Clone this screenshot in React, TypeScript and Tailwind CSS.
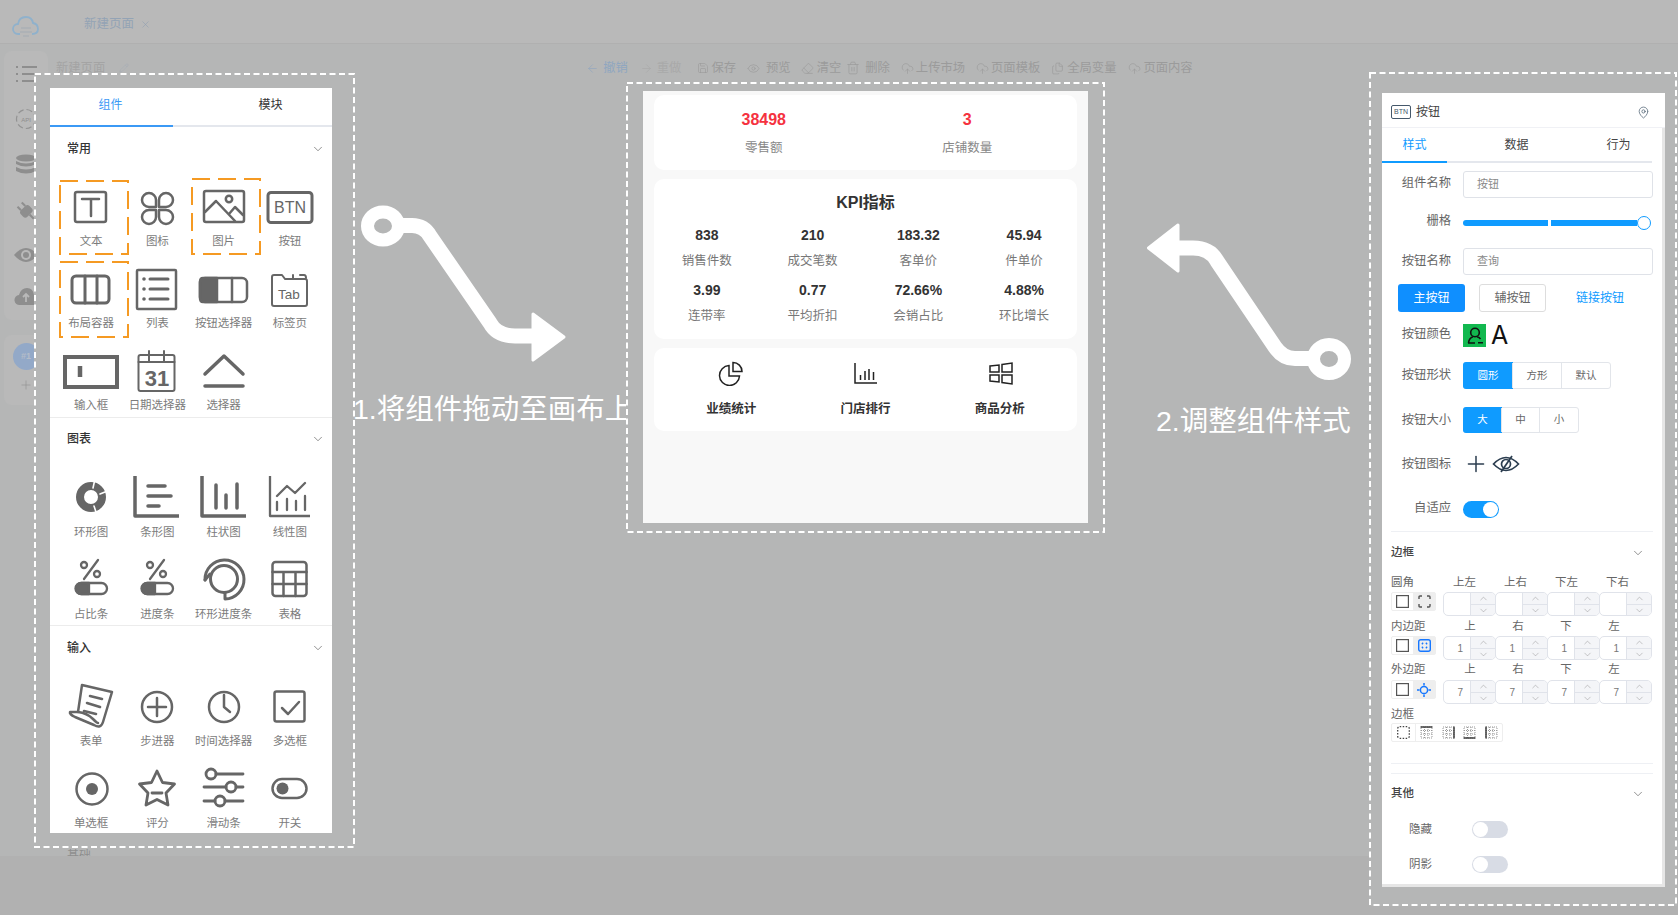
import type { ReactNode } from "react";
import { ArrowLeft, ArrowRight, ChevronDown, ChevronUp, CloudUpload, Eraser, Eye, Files, MapPin, Pencil, Plus, Save, Trash2, X } from "lucide-react";

function Ic({ children, sw = 2.5 }: { children: ReactNode; sw?: number }) {
  return (
    <svg width="44" height="44" viewBox="0 0 44 44" fill="none" stroke="#666" strokeWidth={sw} strokeLinecap="round" strokeLinejoin="round" className="overflow-visible">
      {children}
    </svg>
  );
}

const icons: Record<string, ReactNode> = {
  文本: <Ic><rect x="6" y="6" width="31" height="30" rx="2" /><path d="M13 13H30M22 13V30" /></Ic>,
  图标: <Ic><path d="M21 21H14a7 7 0 1 1 7-7ZM24 21V14a7 7 0 1 1 7 7ZM21 24V31a7 7 0 1 1-7-7ZM24 24H31a7 7 0 1 1-7 7Z" /></Ic>,
  图片: <Ic><rect x="2" y="5" width="40" height="31" rx="2" /><circle cx="27" cy="13" r="3.2" /><path d="M3 26L14 15L33 35M27 28L33 21L41 29" /></Ic>,
  按钮: <Ic sw={3}><rect x="0" y="6.5" width="44" height="30" rx="3" /><text x="22" y="27" textAnchor="middle" fontSize="16" fill="#666" stroke="none">BTN</text></Ic>,
  布局容器: <Ic sw={3}><rect x="3" y="8" width="37" height="27" rx="4" /><path d="M16 8V35M28 8V35" /></Ic>,
  列表: <Ic sw={2.5}><rect x="2" y="2" width="39" height="39" rx="1" /><path d="M15 11H33M15 21H33M15 31H33" strokeWidth="3" /><circle cx="9" cy="11" r="1.8" fill="#666" stroke="none" /><circle cx="9" cy="21" r="1.8" fill="#666" stroke="none" /><circle cx="9" cy="31" r="1.8" fill="#666" stroke="none" /></Ic>,
  按钮选择器: <Ic sw={2.5}><rect x="-2" y="10" width="47" height="24" rx="5" /><path d="M1 10H15V34H1Q-2 34-2 30V14Q-2 10 1 10Z" fill="#666" /><path d="M30 10V34" /></Ic>,
  标签页: <Ic sw={2}><path d="M4 36V9q0-2 2-2h8l3 4H37q2 0 2 2V36q0 2-2 2H6q-2 0-2-2ZM17 11H38M25 7V11M32 7H36Q38 7 38 10" /><text x="21" y="31" textAnchor="middle" fontSize="13.5" fill="#666" stroke="none">Tab</text></Ic>,
  输入框: <Ic sw={4}><path d="M-4 7H48V37H-4Z" strokeLinejoin="miter" /><path d="M11 16V27" strokeLinecap="butt" strokeWidth="4.5" /></Ic>,
  日期选择器: <Ic sw={2}><rect x="3.5" y="5" width="36" height="36" rx="2" /><path d="M3.5 12H39.5M14 1V12M29 1V12" /><text x="22" y="36" textAnchor="middle" fontSize="22" fontWeight="700" fill="#666" stroke="none">31</text></Ic>,
  选择器: <Ic sw={3.5}><path d="M3 24L22 6L41 24M3 36H41" /></Ic>,
  环形图: <Ic sw={8}><circle cx="22" cy="22" r="11" /><path d="M26 4L24 13M41 15L31 19M28 40L25 31" stroke="#fff" strokeWidth="1.6" /></Ic>,
  条形图: <Ic sw={3.5}><path d="M0 1V41H44" strokeLinecap="butt" /><path d="M13 11H30M13 21H36M13 31H24" /></Ic>,
  柱状图: <Ic sw={3.5}><path d="M0 1V41H44" strokeLinecap="butt" /><path d="M14 10V33M24 20V33M35 9V33" /></Ic>,
  线性图: <Ic sw={2.3}><path d="M2 1V41H42" strokeLinecap="butt" /><path d="M9 21L19 11L27 18L37 8M9 27V35M19 24V35M28 26V35M37 21V35" /></Ic>,
  占比条: <Ic sw={2.3}><circle cx="15" cy="8" r="3" /><circle cx="28" cy="17" r="3" /><path d="M29 3L15 22" /><rect x="7" y="26" width="31" height="11" rx="5.5" /><path d="M12 26H20V37H12A5.5 5.5 0 0 1 12 26Z" fill="#666" /></Ic>,
  进度条: <Ic sw={2.3}><circle cx="15" cy="8" r="3" /><circle cx="28" cy="17" r="3" /><path d="M29 3L15 22" /><rect x="7" y="26" width="31" height="11" rx="5.5" /><path d="M12 26H20V37H12A5.5 5.5 0 0 1 12 26Z" fill="#666" /></Ic>,
  环形进度条: <Ic sw={3}><circle cx="22" cy="22" r="13.5" /><path d="M3 23A19.5 19.5 0 1 1 23 42V36" /><path d="M3 23L8 17" /></Ic>,
  表格: <Ic sw={2.5}><rect x="4.5" y="5" width="34" height="34" rx="3" /><path d="M4.5 15H38.5M4.5 27H38.5M15.5 15V39M27.5 15V39" /></Ic>,
  表单: <Ic sw={2.5}><path d="M13 0L43 7L34 37Q32 44 25 40L6 32Q0 29 1 27L9 27Z" /><path d="M9 27Q18 28 24 34Q28 38 29 38" /><path d="M21 11L33 14M18 18L31 22M15 26L27 29" strokeWidth="2.6" /></Ic>,
  步进器: <Ic sw={2.5}><circle cx="22" cy="22" r="15" /><path d="M22 13V31M13 22H31" /></Ic>,
  时间选择器: <Ic sw={2.5}><circle cx="22" cy="22" r="15" /><path d="M22 10V22L28 27" /></Ic>,
  多选框: <Ic sw={2.5}><rect x="6.5" y="6.5" width="30" height="30" rx="2" /><path d="M14 23L20 29L31 17" /></Ic>,
  单选框: <Ic sw={2.5}><circle cx="23" cy="22" r="15.5" /><circle cx="23" cy="22" r="6" fill="#666" stroke="none" /></Ic>,
  评分: <Ic sw={2.8}><path d="M22 4L27.5 15.5L39.5 17L31 26L33 38L22 32.5L11 38L13 26L4.5 17L16.5 15.5Z" /><path d="M17 26H27" /></Ic>,
  滑动条: <Ic sw={2.8}><path d="M14 7H41M2 20H24M34 20H41M2 34H13M23 34H41" /><circle cx="9" cy="7" r="5" /><circle cx="29" cy="20" r="5" /><circle cx="18" cy="34" r="5" /></Ic>,
  开关: <Ic sw={2.5}><rect x="4.5" y="12" width="34" height="19" rx="9.5" /><circle cx="14.5" cy="21.5" r="6" fill="#666" stroke="none" /></Ic>,
};

function DashBox({ w, h, color, dash, sw }: { w: number; h: number; color: string; dash: string; sw: number }) {
  return (
    <svg width={w} height={h} className="absolute left-0 top-0 pointer-events-none overflow-visible">
      <rect x={sw / 2} y={sw / 2} width={w - sw} height={h - sw} fill="none" stroke={color} strokeWidth={sw} strokeDasharray={dash} />
    </svg>
  );
}

function Item({ name, mark, labelClass }: { name: string; mark?: ReactNode; labelClass: string }) {
  return (
    <div className="relative flex h-[82px] flex-col items-center pt-[19px]">
      <div className="flex h-[44px] w-[44px] shrink-0 items-center justify-center">{icons[name]}</div>
      <div className={`whitespace-nowrap text-[11.5px] leading-[20px] text-[#7c7c7c] ${labelClass}`}>{name}</div>
      {mark}
    </div>
  );
}

function PaletteSection({ title, names, headClass, labelClass, marks }: { title: string; names: string[]; headClass: string; labelClass: string; marks?: Record<string, ReactNode> }) {
  return (
    <div>
      <div className={`flex items-center justify-between pl-[17px] pr-[7px] ${headClass}`}>
        <span className="text-[12px] font-medium text-[#333]">{title}</span>
        <ChevronDown size={14} strokeWidth={1} color="#444" />
      </div>
      <div className="grid grid-cols-4 pl-[8px] pr-[9px] -mt-1">
        {names.map((n) => (
          <Item key={n} name={n} mark={marks?.[n]} labelClass={labelClass} />
        ))}
      </div>
    </div>
  );
}

function Palette() {
  const marks = {
    文本: <div className="absolute left-[1px] top-[13px]"><DashBox w={70} h={75} color="#f59a23" dash="18 8" sw={2} /></div>,
    图片: <div className="absolute left-[0px] top-[11px]"><DashBox w={70} h={77} color="#f59a23" dash="18 8" sw={2} /></div>,
    布局容器: <div className="absolute left-[1px] top-[12px]"><DashBox w={70} h={77} color="#f59a23" dash="18 8" sw={2} /></div>,
  };
  return (
    <div className="h-[745px] w-[282px] overflow-hidden bg-white">
      <div className="flex h-[39px] border-b-2 border-[#e4e7ed]">
        <div className="-mb-[2px] flex w-[123px] items-center justify-center border-b-[2px] border-[#3b99f5] pb-[4px] pr-[2px] text-[12px] text-[#3b99f5]">组件</div>
        <div className="flex flex-1 items-center justify-center pb-[4px] pl-[36px] text-[12px] text-[#333]">模块</div>
      </div>
      <div className="border-b border-[#ececec] h-[291px]">
        <PaletteSection title="常用" headClass="h-[44px]" labelClass="mt-[1px]" names={["文本", "图标", "图片", "按钮", "布局容器", "列表", "按钮选择器", "标签页", "输入框", "日期选择器", "选择器"]} marks={marks} />
      </div>
      <div className="border-b border-[#ececec] h-[208px]">
        <PaletteSection title="图表" headClass="h-[42px]" labelClass="mt-[3px]" names={["环形图", "条形图", "柱状图", "线性图", "占比条", "进度条", "环形进度条", "表格"]} />
      </div>
      <PaletteSection title="输入" headClass="h-[44px]" labelClass="mt-[2px]" names={["表单", "步进器", "时间选择器", "多选框", "单选框", "评分", "滑动条", "开关"]} />
    </div>
  );
}

function Stat({ value, label }: { value: string; label: string }) {
  return (
    <div className="flex flex-col items-center">
      <div className="h-[26px] text-[14px] font-bold leading-[26px] text-[#333]">{value}</div>
      <div className="text-[12.5px] leading-[26px] text-[#777]">{label}</div>
    </div>
  );
}

function Phone() {
  return (
    <div className="flex h-[432px] w-[445px] flex-col gap-[9px] bg-[#f8f8f8] px-[11px] pt-[4px]">
      <div className="flex h-[75px] rounded-[10px] bg-white px-[8px] pt-[12px]">
        {[["38498", "零售额"], ["3", "店铺数量"]].map(([v, l]) => (
          <div key={l} className="flex flex-1 flex-col items-center">
            <div className="h-[26px] text-[16px] font-bold leading-[26px] text-[#f5323f]">{v}</div>
            <div className="mt-[2px] text-[12.5px] leading-[26px] text-[#888]">{l}</div>
          </div>
        ))}
      </div>
      <div className="h-[160px] rounded-[10px] bg-white pt-[12px]">
        <div className="text-center text-[16px] font-bold leading-[24px] text-[#333]">KPI指标</div>
        <div className="mt-[7px] grid grid-cols-4 gap-y-[3px]">
          {[["838", "销售件数"], ["210", "成交笔数"], ["183.32", "客单价"], ["45.94", "件单价"], ["3.99", "连带率"], ["0.77", "平均折扣"], ["72.66%", "会销占比"], ["4.88%", "环比增长"]].map(([v, l]) => (
            <Stat key={l} value={v} label={l} />
          ))}
        </div>
      </div>
      <div className="grid h-[83px] grid-cols-3 rounded-[10px] bg-white px-[10px] pt-[12px]">
        {[
          ["业绩统计", <g key="a"><path d="M11 5.5A10 10 0 1 0 21.5 16H11Z" /><path d="M15 2.5A9 9 0 0 1 24 11.5H15Z" /></g>],
          ["门店排行", <g key="b"><path d="M3 3V23H25" /><path d="M8.5 15V20M13 11V20M17 9V20M21.5 12V20" /></g>],
          ["商品分析", <g key="c"><path d="M3 6L12 5V12H3ZM3 15H12V22L3 21ZM15 4.5L25 3V12H15ZM15 15H25V24L15 22.5Z" /></g>],
        ].map(([l, g]) => (
          <div key={l as string} className="flex flex-col items-center">
            <svg width="26" height="26" viewBox="0 0 26 26" fill="none" stroke="#222" strokeWidth="1.5">{g}</svg>
            <div className="mt-[13px] text-[12.5px] font-semibold leading-[20px] text-[#333]">{l}</div>
          </div>
        ))}
      </div>
    </div>
  );
}

function FormLabel({ children }: { children: ReactNode }) {
  return <div className="w-[69px] shrink-0 text-right text-[12.3px] text-[#666]">{children}</div>;
}

function TextField({ value }: { value: string }) {
  return <div className="ml-[12px] flex h-[27px] w-[190px] items-center rounded-[3px] border border-[#dfe2e8] pl-[13px] text-[11px] text-[#8a8a8a]">{value}</div>;
}

function Segments({ items, widths, h }: { items: string[]; widths: string[]; h: string }) {
  return (
    <div className={`ml-[12px] flex ${h} rounded-[3px] border border-[#e2e5ea] text-[10.5px] text-[#666]`}>
      {items.map((s, i) => (
        <div key={s} className={`flex items-center justify-center ${widths[i]} ${i === 0 ? "-m-px rounded-l-[3px] bg-[#0f9bff] text-white" : "border-l border-[#e2e5ea] first:border-0"}`}>
          {s}
        </div>
      ))}
    </div>
  );
}

function Toggle({ on }: { on?: boolean }) {
  return (
    <div className={`flex h-[17px] w-[36px] items-center rounded-full px-[1px] ${on ? "justify-end bg-[#0f9bff]" : "bg-[#d8dce5]"}`}>
      <div className="h-[15px] w-[15px] rounded-full bg-white" />
    </div>
  );
}

function NumBox({ value }: { value?: string }) {
  return (
    <div className="-mr-px flex h-[24px] w-[53px] overflow-hidden rounded-[5px] border border-[#e0e3ea]">
      <div className="flex w-[26px] items-center justify-end pr-[7px] text-[10px] text-[#777]">{value}</div>
      <div className="flex flex-1 flex-col border-l border-[#e0e3ea] bg-[#f4f5f8]">
        <div className="flex flex-1 items-center justify-center border-b border-[#e0e3ea]"><ChevronUp size={11} strokeWidth={1} color="#888" /></div>
        <div className="flex flex-1 items-center justify-center"><ChevronDown size={11} strokeWidth={1} color="#888" /></div>
      </div>
    </div>
  );
}

function SpacingRow({ label, heads, headWidth, labelWidth, labelRow, value, icon }: { label: string; heads: string[]; headWidth: string; labelWidth: string; labelRow: string; value?: string; icon: ReactNode }) {
  return (
    <>
      <div className={`flex h-[18px] text-[11.5px] text-[#666] ${labelRow}`}>
        <div className={labelWidth}>{label}</div>
        {heads.map((h, i) => (
          <div key={i} className={`${headWidth} text-center`}>{h}</div>
        ))}
      </div>
      <div className="mt-[1px] flex h-[24px] items-start">
        <div className="mr-[7px] flex h-[19px] w-[45px] items-stretch rounded-[2px] border border-[#eeeeee]">
          <div className="flex w-[21px] items-center justify-center">
            <svg width="13" height="13" viewBox="0 0 13 13" fill="none" stroke="#555" strokeWidth="1.2"><rect x="0.6" y="0.6" width="11.8" height="11.8" /></svg>
          </div>
          <div className="flex flex-1 items-center justify-center bg-[#eeeeee]">{icon}</div>
        </div>
        {[0, 1, 2, 3].map((i) => (
          <NumBox key={i} value={value} />
        ))}
      </div>
    </>
  );
}

function ConfigPanel() {
  return (
    <div className="h-[794px] w-[283px] bg-white">
      <div className="flex h-[35px] items-center border-b border-[#f0f1f5] pl-[9px] pr-[15px] pt-[4px]">
        <div className="flex h-[14px] w-[20px] items-center justify-center rounded-[2px] border-[1.5px] border-[#45586b] text-[7px] text-[#45586b]">BTN</div>
        <span className="ml-[5px] text-[12px] text-[#444]">按钮</span>
        <MapPin size={13} strokeWidth={1.3} color="#45586b" className="ml-auto" />
      </div>
      <div className="h-[759px] border-r-[3px] border-b-[3px] border-[#e6e6e6]">
        <div className="mr-[10px] flex h-[35px] border-b-2 border-[#e4e7ed] text-[12px]">
          <div className="-mb-[2px] flex w-[65px] items-center justify-center border-b-2 border-[#0f9bff] text-[#0f9bff]">样式</div>
          <div className="ml-[37px] flex w-[65px] items-center justify-center text-[#444]">数据</div>
          <div className="ml-[37px] flex w-[65px] items-center justify-center text-[#444]">行为</div>
        </div>
        <div className="mt-[8px] flex items-center"><div className="-mt-[2px]"><FormLabel>组件名称</FormLabel></div><TextField value="按钮" /></div>
        <div className="flex h-[50px] items-center">
          <div className="-mt-[4px]"><FormLabel>栅格</FormLabel></div>
          <div className="ml-[12px] flex w-[188px] items-center">
            <div className="h-[6px] w-[85px] rounded-l-full bg-[#0f9bff]" />
            <div className="ml-[3px] h-[6px] flex-1 bg-[#0f9bff]" />
            <div className="h-[14px] w-[14px] rounded-full border-[1.5px] border-[#0f9bff] bg-white" />
          </div>
        </div>
        <div className="flex items-center"><div className="-mt-[1px]"><FormLabel>按钮名称</FormLabel></div><TextField value="查询" /></div>
        <div className="mt-[9px] flex h-[28px] items-center pl-[16px] text-[12px]">
          <div className="flex h-[28px] w-[67px] items-center justify-center rounded-[3px] bg-[#0f8fff] text-white">主按钮</div>
          <div className="ml-[14px] flex h-[28px] w-[67px] items-center justify-center rounded-[3px] border border-[#dddddd] text-[#666]">辅按钮</div>
          <div className="w-[108px] text-center text-[#0f9bff]">链接按钮</div>
        </div>
        <div className="mt-[12px] flex h-[23px] items-center">
          <div className="-mt-[2px]"><FormLabel>按钮颜色</FormLabel></div>
          <div className="ml-[12px] flex h-[23px] w-[23px] items-center justify-center bg-[#12b84f]">
            <svg width="20" height="20" viewBox="0 0 20 20" fill="none" stroke="#111" strokeWidth="1.6"><circle cx="10" cy="6.5" r="4.3" /><path d="M3.5 17Q4 12 8 10.8M12 10.8Q14.5 11.6 15.5 13M3 17H10M13 16.8H18" /></svg>
          </div>
          <span className="ml-[5px] text-[25px] leading-none text-[#111] font-['Inter',sans-serif]">A</span>
        </div>
        <div className="mt-[15px] flex items-center">
          <FormLabel>按钮形状</FormLabel>
          <Segments items={["圆形", "方形", "默认"]} widths={["w-[50px]", "w-[49px]", "w-[49px]"]} h="h-[27px]" />
        </div>
        <div className="mt-[18px] flex items-center">
          <FormLabel>按钮大小</FormLabel>
          <Segments items={["大", "中", "小"]} widths={["w-[39px]", "w-[38px]", "w-[39px]"]} h="h-[26px]" />
        </div>
        <div className="mt-[20px] flex h-[20px] items-center">
          <div className="mt-[2px]"><FormLabel>按钮图标</FormLabel></div>
          <Plus size={26} strokeWidth={1.4} color="#2c3e50" className="ml-[12px] mt-[1px] shrink-0" />
          <svg width="28" height="20" viewBox="0 0 28 20" fill="none" stroke="#2c3e50" strokeWidth="1.7" className="ml-[3px] mt-[1px]"><path d="M1.5 10Q14-3 26.5 10Q14 23 1.5 10Z" /><circle cx="14" cy="10" r="4.5" /><path d="M9 18L20 2" /></svg>
        </div>
        <div className="mt-[28px] flex h-[17px] items-center">
          <div className="-mt-[2px]"><FormLabel>自适应</FormLabel></div>
          <div className="ml-[12px]"><Toggle on /></div>
        </div>
        <div className="mx-[9px] mt-[13px] border-t border-[#eef0f4]" />
        <div className="flex h-[41px] items-center justify-between pl-[9px] pr-[17px] text-[11.5px] font-medium text-[#444]">
          <span>边框</span>
          <ChevronDown size={14} strokeWidth={1} color="#444" />
        </div>
        <div className="pl-[9px]">
          <SpacingRow label="圆角" heads={["上左", "上右", "下左", "下右"]} headWidth="w-[51px]" labelWidth="w-[48px]" labelRow="items-end" icon={<svg width="13" height="13" viewBox="0 0 13 13" fill="none" stroke="#555" strokeWidth="1.4"><path d="M1 4V2Q1 1 2 1H4M9 1H11Q12 1 12 2V4M12 9V11Q12 12 11 12H9M4 12H2Q1 12 1 11V9" /></svg>} />
          <div className="mt-[1px]" />
          <SpacingRow label="内边距" heads={["上", "右", "下", "左"]} headWidth="w-[48px]" labelWidth="w-[55px]" labelRow="items-center pt-[2px]" value="1" icon={<svg width="13" height="13" viewBox="0 0 13 13" fill="none" stroke="#1677ff" strokeWidth="1.4"><rect x="0.7" y="0.7" width="11.6" height="11.6" rx="2" /><path d="M4 4L5 5M9 4L8 5M4 9L5 8M9 9L8 8" strokeWidth="1.8" /></svg>} />
          <div className="mt-[1px]" />
          <SpacingRow label="外边距" heads={["上", "右", "下", "左"]} headWidth="w-[48px]" labelWidth="w-[55px]" labelRow="items-center" value="7" icon={<svg width="14" height="14" viewBox="0 0 14 14" fill="none" stroke="#1677ff" strokeWidth="1.5"><circle cx="7" cy="7" r="3.6" /><path d="M7 0V2.5M7 11.5V14M0 7H2.5M11.5 7H14" /></svg>} />
          <div className="mt-[1px] h-[18px] text-[11.5px] leading-[18px] text-[#666]">边框</div>
          <div className="flex h-[19px] w-[112px] items-center rounded-[2px] border border-[#eeeeee]">
            <div className="flex h-full w-[24px] items-center justify-center border-r border-[#eeeeee]">
              <svg width="13" height="13" viewBox="0 0 13 13" fill="none" stroke="#444" strokeWidth="1.3" strokeDasharray="1.5 1.5"><rect x="0.7" y="0.7" width="11.6" height="11.6" rx="2" /></svg>
            </div>
            {["M0.5 1H12.5", "M12 0.5V12.5", "M0.5 12H12.5", "M1 0.5V12.5"].map((d) => (
              <div key={d} className="flex flex-1 items-center justify-center">
                <svg width="13" height="13" viewBox="0 0 13 13" fill="none" stroke="#999" strokeWidth="1" strokeDasharray="1 1"><path d="M1 1H12V12H1ZM1 4.500H12M1 8H12M4.500 1V12M8 1V12" /><path d={d} stroke="#333" strokeWidth="1.4" strokeDasharray="none" /></svg>
              </div>
            ))}
          </div>
        </div>
        <div className="mx-[9px] mt-[21px] border-t border-[#eef0f4]" />
        <div className="mx-[9px] mt-[9px] border-t border-[#eef0f4]" />
        <div className="flex h-[40px] items-center justify-between pl-[9px] pr-[17px] text-[11.5px] font-medium text-[#444]">
          <span>其他</span>
          <ChevronDown size={14} strokeWidth={1} color="#444" />
        </div>
        <div className="mt-[7px] flex h-[17px] items-center pl-[27px] text-[11.5px] text-[#666]"><span className="w-[63px]">隐藏</span><Toggle /></div>
        <div className="mt-[18px] flex h-[17px] items-center pl-[27px] text-[11.5px] text-[#666]"><span className="w-[63px]">阴影</span><Toggle /></div>
      </div>
    </div>
  );
}

function Backdrop() {
  const tools: [ReactNode, string, string][] = [
    [<ArrowLeft key="a" size={13} strokeWidth={1.2} color="#8fa6c0" />, "撤销", "text-[#8fa6c0] gap-[4px]"],
    [<ArrowRight key="b" size={13} strokeWidth={1.2} />, "重做", "text-[#a9a9a9] gap-[4px] ml-[12px]"],
    [<Save key="c" size={12} strokeWidth={1.2} />, "保存", "text-[#9b9b9b] gap-[2px] ml-[16px]"],
    [<Eye key="d" size={13} strokeWidth={1.2} />, "预览", "text-[#9b9b9b] gap-[6px] ml-[11px]"],
    [<Eraser key="e" size={13} strokeWidth={1.2} />, "清空", "text-[#9b9b9b] gap-[3px] ml-[10px]"],
    [<Trash2 key="f" size={14} strokeWidth={1.2} />, "删除", "text-[#9b9b9b] gap-[5px] ml-[5px]"],
    [<CloudUpload key="g" size={13} strokeWidth={1.2} />, "上传市场", "text-[#9b9b9b] gap-[2px] ml-[11px]"],
    [<CloudUpload key="h" size={13} strokeWidth={1.2} />, "页面模板", "text-[#9b9b9b] gap-[2px] ml-[11px]"],
    [<Files key="i" size={13} strokeWidth={1.2} />, "全局变量", "text-[#9b9b9b] gap-[3px] ml-[11px]"],
    [<CloudUpload key="j" size={13} strokeWidth={1.2} />, "页面内容", "text-[#9b9b9b] gap-[2px] ml-[12px]"],
  ];
  return (
    <div className="flex h-full flex-col">
      <div className="flex h-[44px] shrink-0 items-center border-b border-[#b0b0b0] bg-[#b9b9b9] pt-[5px]">
        <svg width="28" height="24" viewBox="0 0 28 24" fill="none" stroke="#8fb1cc" strokeWidth="1.8" className="ml-[12px] mt-[4px]">
          <path d="M8 20H6A5 5 0 0 1 6 10Q7 3 14 3Q20 3 21 9Q26 10 26 15Q26 20 20 20" />
          <path d="M9 14H19M8 18H20M11 22H17" stroke="#aab0b5" strokeWidth="1.4" />
        </svg>
        <span className="ml-[44px] text-[12.5px] text-[#93a3b5]">新建页面</span>
        <X size={11} strokeWidth={1.2} color="#8d9db0" className="ml-[6px]" />
      </div>
      <div className="relative flex h-[812px] shrink-0 overflow-hidden bg-[#b5b6b6]">
        <div className="flex w-[56px] shrink-0 flex-col pl-[4px] pt-[7px]">
          <div className="flex h-[269px] w-[44px] flex-col items-center gap-[23px] rounded-[8px] bg-[#b9b9b9] pt-[13px]">
            <svg width="22" height="20" viewBox="0 0 22 20" fill="none" stroke="#8e8e8e" strokeWidth="2.2"><path d="M7 3H22M7 10H22M7 17H22M1 3H3M1 10H3M1 17H3" /></svg>
            <svg width="24" height="24" viewBox="0 0 24 24" fill="none" stroke="#939393" strokeWidth="1.2"><circle cx="12" cy="12" r="9.5" strokeDasharray="6 3" /><text x="12" y="14.500" textAnchor="middle" fontSize="6" fill="#8e8e8e" stroke="none">API</text></svg>
            <svg width="22" height="22" viewBox="0 0 22 22" fill="#8e8e8e"><ellipse cx="11" cy="4" rx="10" ry="3.5" /><path d="M1 7Q11 12 21 7V10Q11 15 1 10ZM1 13Q11 18 21 13V17Q11 22 1 17Z" /></svg>
            <svg width="24" height="24" viewBox="0 0 24 24" fill="#8e8e8e"><g transform="rotate(-45 12 12)"><rect x="6" y="8" width="12" height="9" rx="3" /><rect x="8" y="3" width="2" height="5" /><rect x="14" y="3" width="2" height="5" /><rect x="11" y="17" width="2" height="6" /></g></svg>
            <svg width="24" height="18" viewBox="0 0 24 18"><path d="M0 9Q12-5 24 9Q12 23 0 9Z" fill="#8e8e8e" /><circle cx="12" cy="9" r="5" fill="#b9b9b9" /><circle cx="12" cy="9" r="3" fill="#8e8e8e" /></svg>
            <svg width="24" height="20" viewBox="0 0 24 20"><path d="M6 18A5 5 0 0 1 5 8Q7 1 13 1Q19 1 20 8A5 5 0 0 1 19 18Z" fill="#8e8e8e" /><path d="M12 15V8M9 10L12 7L15 10" fill="none" stroke="#b9b9b9" strokeWidth="1.8" /></svg>
          </div>
          <div className="mt-[15px] flex h-[70px] w-[44px] flex-col items-center rounded-[8px] bg-[#b9b9b9] pt-[8px]">
            <div className="flex h-[27px] w-[27px] items-center justify-center rounded-full bg-[#93a9c8] text-[9px] font-bold text-[#b4bcc8]">#1</div>
            <Plus size={14} strokeWidth={1} color="#8e8e8e" className="mt-[8px]" />
          </div>
        </div>
        <div className="flex-1 pt-[15px]">
          <div className="flex h-[18px] items-center text-[12.3px] text-[#a4a4a4]">
            <span>新建页面</span>
            <Pencil size={10} strokeWidth={1} color="#a0aab5" className="ml-[14px]" />
            <div className="ml-[457px] flex items-center">
              {tools.map(([ic, label, cls]) => (
                <div key={label} className={`flex items-center ${cls}`}>
                  {ic}
                  <span>{label}</span>
                </div>
              ))}
            </div>
          </div>
        </div>
        <div className="absolute bottom-[-9px] left-[67px] text-[12px] text-[#8e8e8e]">基础</div>
      </div>
      <div className="flex-1 bg-[#b1b1b1]" />
    </div>
  );
}

export default function App() {
  return (
    <div className="relative h-[915px] w-[1678px] overflow-hidden font-['Liberation_Sans','Noto_Sans_CJK_SC',sans-serif]">
      <Backdrop />

      <div className="absolute left-[34px] top-[73px] h-[775px] w-[321px] bg-[#b5b6b6] pl-[16px] pt-[15px]">
        <DashBox w={321} h={775} color="#fff" dash="6 3.5" sw={2} />
        <Palette />
      </div>

      <svg width="240" height="160" viewBox="0 0 240 160" fill="none" className="absolute left-[350px] top-[205px]">
        <ellipse cx="33" cy="21" rx="15.5" ry="14" stroke="#fff" strokeWidth="13" />
        <path d="M48 20.500H62Q74 20.500 80 31L140 118Q147 131 165 131H186" stroke="#fff" strokeWidth="15" />
        <path d="M183 109L214 132L183 155Z" fill="#fff" stroke="#fff" strokeWidth="3" strokeLinejoin="round" />
      </svg>
      <div className="absolute left-[353px] top-[390px] whitespace-nowrap text-[28.5px] leading-[38px] text-white">1.将组件拖动至画布上</div>

      <div className="absolute left-[626px] top-[82px] h-[451px] w-[479px] bg-[#b5b6b6] pl-[17px] pt-[9px]">
        <DashBox w={479} h={451} color="#fff" dash="6 3.5" sw={2} />
        <Phone />
      </div>

      <svg width="220" height="160" viewBox="0 0 220 160" fill="none" className="absolute left-[1145px] top-[220px]">
        <ellipse cx="184" cy="139" rx="15.500" ry="14.500" stroke="#fff" strokeWidth="13" />
        <path d="M170 138.500H150Q138 138.500 130 127L72 41Q65 28 48 28H30" stroke="#fff" strokeWidth="15" />
        <path d="M33 5L3.500 28L33 51Z" fill="#fff" stroke="#fff" strokeWidth="3" strokeLinejoin="round" />
      </svg>
      <div className="absolute left-[1156px] top-[402px] whitespace-nowrap text-[28.5px] leading-[38px] text-white">2.调整组件样式</div>

      <div className="absolute left-[1369px] top-[72px] h-[834px] w-[308px] bg-[#b5b6b6] pl-[13px] pt-[21px]">
        <DashBox w={308} h={834} color="#fff" dash="6 3.5" sw={2} />
        <ConfigPanel />
      </div>
    </div>
  );
}
